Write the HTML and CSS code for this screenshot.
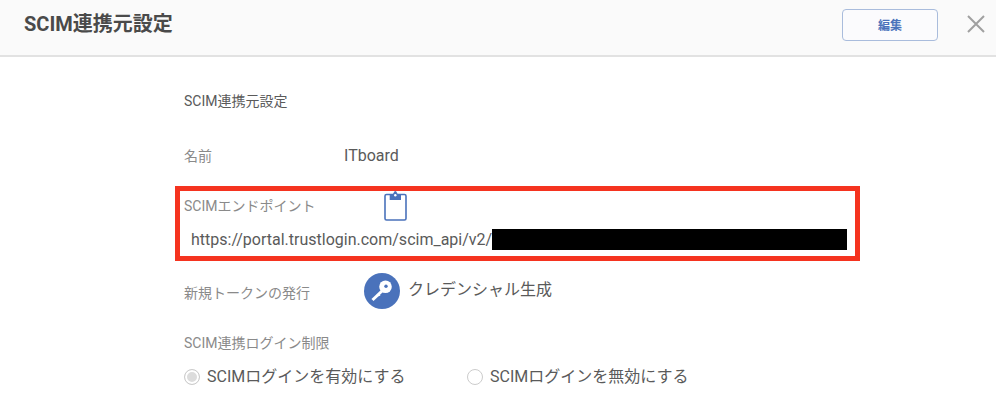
FILE: index.html
```html
<!DOCTYPE html>
<html lang="ja">
<head>
<meta charset="utf-8">
<title>SCIM連携元設定</title>
<link rel="stylesheet" href="styles.css">
</head>
<body>
<header class="header">
  <h1 class="title">SCIM連携元設定</h1>
  <button class="edit" type="button">編集</button>
  <svg class="close" width="18" height="18" viewBox="0 0 18 18"><path d="M1 1L17 17M17 1L1 17" stroke="#a0a0a0" stroke-width="2" fill="none"/></svg>
</header>
<main class="content">
  <div class="section-title">SCIM連携元設定</div>
  <div class="name-row">
    <span class="label name-label">名前</span>
    <span class="value">ITboard</span>
  </div>
  <section class="endpoint">
    <div class="endpoint-head">
      <span class="label endpoint-label">SCIMエンドポイント</span>
      <svg class="clip" width="24" height="31" viewBox="0 0 24 31"><rect x="1" y="4.500" width="21" height="25.500" rx="1.500" fill="#fff" stroke="#4a72bb" stroke-width="1.600"/><path d="M5.700 4H9L10.300 1.500Q11.300 .6 12.300 1.500L13.600 4H17V10H5.700Z" fill="#4a72bb"/><circle cx="11.300" cy="5.300" r="1.200" fill="#fff"/></svg>
    </div>
    <div class="url-row"><span class="url">https://portal.trustlogin.com/scim_api/v2/</span><span class="redact"></span></div>
  </section>
  <div class="token-row">
    <span class="label token-label">新規トークンの発行</span>
    <button class="cred" type="button">
      <svg class="key" width="36" height="36" viewBox="0 0 36 36"><circle cx="18" cy="18" r="18" fill="#4a72bb"/><path d="M19 17L8.500 27" stroke="#fff" stroke-width="3" fill="none"/><path d="M12 24L14.500 20.500L16.500 22.500Z" fill="#fff"/><circle cx="21.500" cy="13.800" r="6.300" fill="#fff"/><circle cx="22" cy="13.300" r="1.700" fill="#4a72bb"/></svg>
      <span class="cred-text">クレデンシャル生成</span>
    </button>
  </div>
  <div class="label limit-label">SCIM連携ログイン制限</div>
  <div class="radios">
    <label class="radio"><span class="dot checked"></span><span>SCIMログインを有効にする</span></label>
    <label class="radio"><span class="dot"></span><span>SCIMログインを無効にする</span></label>
  </div>
</main>
</body>
</html>
```
FILE: styles.css
```css
* { box-sizing: border-box; }
html, body { margin: 0; padding: 0; }
body {
  width: 996px;
  height: 418px;
  overflow: hidden;
  background: #fff;
  font-family: Roboto, "Noto Sans CJK JP", sans-serif;
  color: #555;
}
.header {
  height: 57px;
  background: #fafafa;
  border-bottom: 2px solid #e2e2e2;
  display: flex;
  align-items: center;
  padding: 0 11px 5px 24px;
}
.title {
  margin: -3px 0 0;
  flex: 1;
  font-size: 20px;
  line-height: 28px;
  font-weight: 700;
  color: #4a4a4a;
}
.edit {
  width: 96px;
  height: 32px;
  margin: 0;
  padding: 0 0 2px;
  border: 1px solid #a9bcdc;
  border-radius: 4px;
  background: #fbfbfd;
  color: #4a72bb;
  font: 700 12px Roboto, "Noto Sans CJK JP", sans-serif;
}
.close { margin: -2px 0 0 29px; }
.content { padding-left: 175px; }
.section-title {
  margin: 35px 0 0 9px;
  font-size: 14px;
  line-height: 18px;
  color: #5a5a5a;
}
.label { font-size: 14px; line-height: 18px; color: #8a8a8a; }
.name-row {
  display: flex;
  align-items: center;
  margin: 37px 0 0 9px;
  height: 18px;
}
.name-label { width: 160px; }
.value { font-size: 16px; line-height: 16px; color: #5a5a5a; }
.endpoint {
  width: 685px;
  height: 75px;
  margin-top: 21px;
  border: 5px solid #f5331f;
  padding: 0 8px 0 4px;
}
.endpoint-head { display: flex; height: 38px; }
.endpoint-label { width: 200px; margin-top: 6px; }
.clip { margin-top: -1px; }
.url-row { display: flex; height: 21px; padding-left: 7px; }
.url { font-size: 16px; line-height: 21px; color: #5a5a5a; white-space: nowrap; }
.redact { flex: 1; background: #000; }
.token-row { display: flex; margin: 12px 0 0 9px; height: 36px; }
.token-label { width: 180px; margin-top: 11px; }
.cred {
  display: flex;
  align-items: flex-start;
  padding: 0;
  border: 0;
  background: none;
  font: inherit;
  color: #5a5a5a;
}
.cred-text { font-size: 16px; line-height: 20px; margin: 7px 0 0 8px; }
.limit-label { margin: 25px 0 0 9px; }
.radios { display: flex; margin: 14px 0 0 9px; }
.radio {
  display: flex;
  align-items: center;
  width: 283px;
  font-size: 16px;
  line-height: 22px;
  color: #5a5a5a;
}
.dot {
  width: 16px;
  height: 16px;
  margin-right: 7px;
  border: 1px solid #ccc;
  border-radius: 50%;
  background: #fff;
}
.checked { background: #dcdcdc; box-shadow: inset 0 0 0 2px #fff; }
```
